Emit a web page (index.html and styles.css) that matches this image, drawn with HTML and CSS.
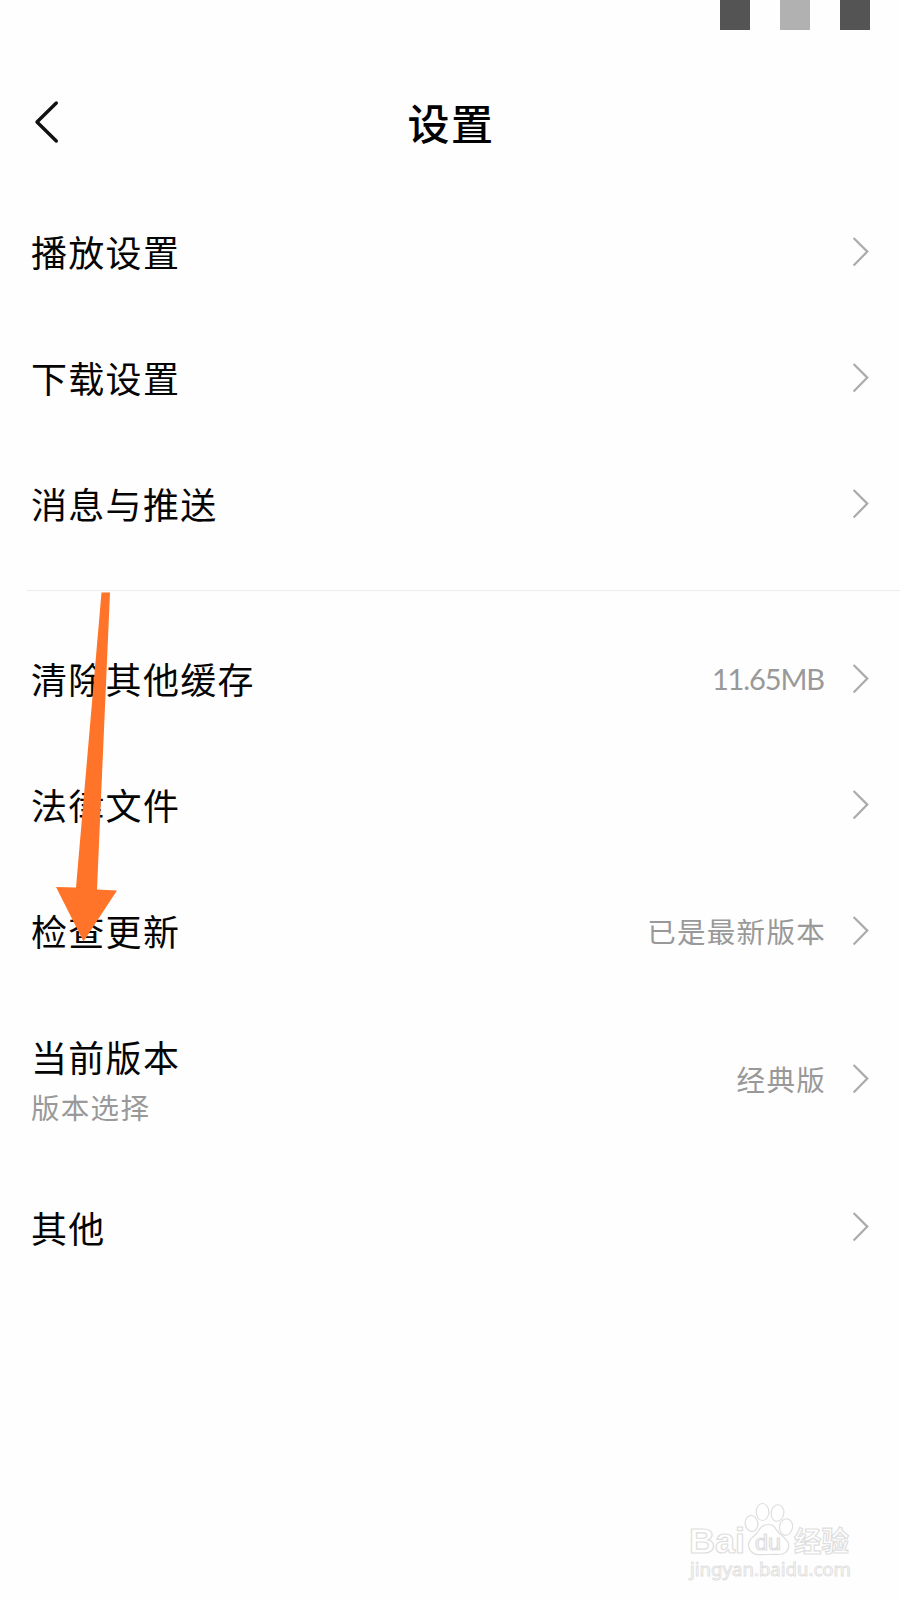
FILE: index.html
```html
<!DOCTYPE html>
<html lang="zh-CN">
<head>
<meta charset="utf-8">
<title>设置</title>
<link rel="stylesheet" href="styles.css">
</head>
<body>
<svg class="defs" width="0" height="0"><symbol id="chevron" viewBox="0 0 18 32"><path d="M1.600 2 15.300 15.600 1.600 29.500"/></symbol></svg>
<main class="screen">
  <div class="status"><i class="block"></i><i class="block light"></i><i class="block"></i></div>
  <header class="header">
    <svg class="back" viewBox="0 0 26 44"><path d="M23.300 3 4 22 23.300 41"/></svg>
    <h1 class="title">设置</h1>
  </header>
  <section class="group">
    <div class="row"><span class="label">播放设置</span><svg class="chevron"><use href="#chevron"/></svg></div>
    <div class="row"><span class="label">下载设置</span><svg class="chevron"><use href="#chevron"/></svg></div>
    <div class="row"><span class="label">消息与推送</span><svg class="chevron"><use href="#chevron"/></svg></div>
  </section>
  <div class="divider"></div>
  <section class="group">
    <div class="row"><span class="label">清除其他缓存</span><span class="value size">11.65MB</span><svg class="chevron"><use href="#chevron"/></svg></div>
    <div class="row"><span class="label">法律文件</span><svg class="chevron"><use href="#chevron"/></svg></div>
    <div class="row"><span class="label">检查更新</span><span class="value">已是最新版本</span><svg class="chevron"><use href="#chevron"/></svg></div>
    <div class="row tall"><div class="stack"><span class="label">当前版本</span><span class="sub">版本选择</span></div><span class="value">经典版</span><svg class="chevron"><use href="#chevron"/></svg></div>
    <div class="row last"><span class="label">其他</span><svg class="chevron"><use href="#chevron"/></svg></div>
  </section>
  <svg class="arrow" viewBox="0 0 62 350"><path d="M45.5 0.5H54L41 297.5 61 298.5 27.5 349.5 0 295 20 295.5Z"/></svg>
  <svg class="watermark" viewBox="0 0 200 100">
    <g class="outline">
      <text class="brand" x="19" y="63" textLength="56" lengthAdjust="spacingAndGlyphs">Bai</text>
      <ellipse cx="81.5" cy="33.5" rx="6.300" ry="8" transform="rotate(-8 81.5 33.5)"/>
      <ellipse cx="92.5" cy="22" rx="6.300" ry="8.5"/>
      <ellipse cx="107.5" cy="23" rx="6.300" ry="8.300" transform="rotate(8 107.5 23)"/>
      <ellipse cx="116" cy="37" rx="6.5" ry="8.300" transform="rotate(10 116 37)"/>
      <path d="M98 34.500C90 34.500 89 42 84 46S77 55 80 60 87 65 98 64.500 115 66 118 59 114 48 109 43 105 34.500 98 34.500Z"/>
      <text class="du" x="85" y="60" textLength="26" lengthAdjust="spacingAndGlyphs">du</text>
      <text class="jingyan" x="124" y="61.500" textLength="55" lengthAdjust="spacingAndGlyphs">经验</text>
    </g>
    <text class="url" x="20" y="85.500" textLength="161" lengthAdjust="spacingAndGlyphs">jingyan.baidu.com</text>
  </svg>
</main>
</body>
</html>
```
FILE: styles.css
```css
* { box-sizing: border-box; }
body { margin: 0; background: #fefefe; font-family: "Noto Sans CJK SC", sans-serif; }
.defs { position: absolute; }
.screen { position: relative; width: 900px; height: 1600px; overflow: hidden; }
.status { display: flex; justify-content: flex-end; gap: 30px; height: 54px; padding-right: 30px; }
.block { width: 30px; height: 30px; background: #545454; }
.block.light { background: #b1b1b1; }
.header { display: grid; grid-template-columns: 60px 1fr 60px; align-items: center; height: 135px; padding: 0 30px; }
.back { width: 26px; height: 44px; margin-left: 3px; fill: none; stroke: #111; stroke-width: 3.4; stroke-linecap: round; stroke-linejoin: round; }
.title { margin: 0; padding-left: 2px; text-align: center; font-size: 42px; line-height: 60px; font-weight: 500; letter-spacing: 1.4px; color: #000; }
.row { display: flex; align-items: center; height: 126px; padding: 0 30px 0 31px; }
.tall { height: 170px; }
.label { flex: 1; padding-bottom: 2px; font-size: 36px; line-height: 54px; letter-spacing: 1.3px; color: #050505; }
.last .label { padding-bottom: 0; }
.stack { flex: 1; display: flex; flex-direction: column; }
.stack .label { flex: none; padding-bottom: 1px; }
.sub { font-size: 28.5px; line-height: 46px; letter-spacing: 1.3px; color: #999; }
.value { margin-right: 26px; padding-bottom: 1px; font-size: 28.5px; line-height: 44px; letter-spacing: 1.3px; color: #999; }
.size { font-family: Lato, sans-serif; font-size: 29px; letter-spacing: -1.1px; margin-right: 28px; }
.chevron { width: 18px; height: 32px; fill: none; stroke: #ababab; stroke-width: 2.2; }
.divider { height: 1px; margin: 23px 0 25px 27px; background: #ededed; }
.arrow { position: absolute; left: 56px; top: 592px; width: 62px; height: 350px; fill: #ff7428; }
.watermark { position: absolute; left: 670px; top: 1490px; width: 200px; height: 100px; font-family: "Noto Sans", sans-serif; }
.outline { fill: #fff; stroke: #dedede; stroke-width: 1.2; }
.brand { font-family: "Liberation Sans", sans-serif; font-size: 35px; font-weight: 700; }
.du { font-family: "Liberation Sans", sans-serif; font-size: 22px; }
.jingyan { font-family: "Noto Sans CJK SC", sans-serif; font-size: 28px; font-weight: 700; }
.url { font-size: 18px; fill: #fff; stroke: #e0e0e0; stroke-width: 0.9; }
```
